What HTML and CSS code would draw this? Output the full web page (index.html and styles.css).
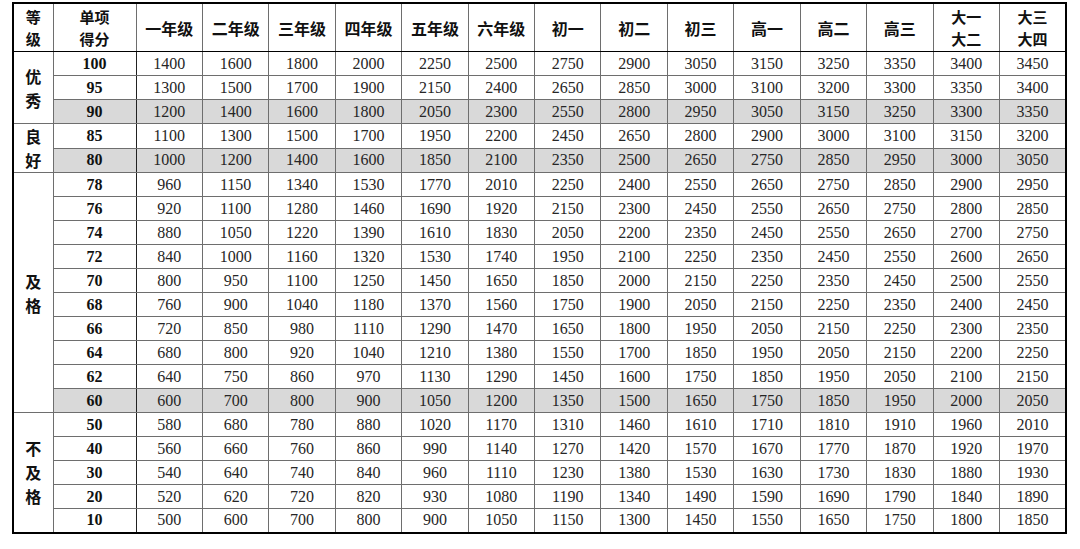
FILE: index.html
```html
<!DOCTYPE html>
<html lang="zh">
<head>
<meta charset="utf-8">
<title>评分表</title>
<link rel="stylesheet" href="styles.css">
</head>
<body>
<table class="score-table">
  <colgroup>
    <col class="c-grade"><col class="c-score">
    <col span="14">
  </colgroup>
  <thead>
    <tr class="head">
      <th class="two">等<br>级</th>
      <th class="two">单项<br>得分</th>
      <th>一年级</th><th>二年级</th><th>三年级</th><th>四年级</th><th>五年级</th><th>六年级</th>
      <th>初一</th><th>初二</th><th>初三</th><th>高一</th><th>高二</th><th>高三</th>
      <th class="two">大一<br>大二</th><th class="two">大三<br>大四</th>
    </tr>
  </thead>
  <tbody>
    <tr class="grp"><td class="grade" rowspan="3">优<br>秀</td><td class="sc">100</td><td>1400</td><td>1600</td><td>1800</td><td>2000</td><td>2250</td><td>2500</td><td>2750</td><td>2900</td><td>3050</td><td>3150</td><td>3250</td><td>3350</td><td>3400</td><td>3450</td></tr>
    <tr><td class="sc">95</td><td>1300</td><td>1500</td><td>1700</td><td>1900</td><td>2150</td><td>2400</td><td>2650</td><td>2850</td><td>3000</td><td>3100</td><td>3200</td><td>3300</td><td>3350</td><td>3400</td></tr>
    <tr class="shade"><td class="sc">90</td><td>1200</td><td>1400</td><td>1600</td><td>1800</td><td>2050</td><td>2300</td><td>2550</td><td>2800</td><td>2950</td><td>3050</td><td>3150</td><td>3250</td><td>3300</td><td>3350</td></tr>
    <tr class="grp"><td class="grade" rowspan="2">良<br>好</td><td class="sc">85</td><td>1100</td><td>1300</td><td>1500</td><td>1700</td><td>1950</td><td>2200</td><td>2450</td><td>2650</td><td>2800</td><td>2900</td><td>3000</td><td>3100</td><td>3150</td><td>3200</td></tr>
    <tr class="shade"><td class="sc">80</td><td>1000</td><td>1200</td><td>1400</td><td>1600</td><td>1850</td><td>2100</td><td>2350</td><td>2500</td><td>2650</td><td>2750</td><td>2850</td><td>2950</td><td>3000</td><td>3050</td></tr>
    <tr class="grp"><td class="grade" rowspan="10">及<br>格</td><td class="sc">78</td><td>960</td><td>1150</td><td>1340</td><td>1530</td><td>1770</td><td>2010</td><td>2250</td><td>2400</td><td>2550</td><td>2650</td><td>2750</td><td>2850</td><td>2900</td><td>2950</td></tr>
    <tr><td class="sc">76</td><td>920</td><td>1100</td><td>1280</td><td>1460</td><td>1690</td><td>1920</td><td>2150</td><td>2300</td><td>2450</td><td>2550</td><td>2650</td><td>2750</td><td>2800</td><td>2850</td></tr>
    <tr><td class="sc">74</td><td>880</td><td>1050</td><td>1220</td><td>1390</td><td>1610</td><td>1830</td><td>2050</td><td>2200</td><td>2350</td><td>2450</td><td>2550</td><td>2650</td><td>2700</td><td>2750</td></tr>
    <tr><td class="sc">72</td><td>840</td><td>1000</td><td>1160</td><td>1320</td><td>1530</td><td>1740</td><td>1950</td><td>2100</td><td>2250</td><td>2350</td><td>2450</td><td>2550</td><td>2600</td><td>2650</td></tr>
    <tr><td class="sc">70</td><td>800</td><td>950</td><td>1100</td><td>1250</td><td>1450</td><td>1650</td><td>1850</td><td>2000</td><td>2150</td><td>2250</td><td>2350</td><td>2450</td><td>2500</td><td>2550</td></tr>
    <tr><td class="sc">68</td><td>760</td><td>900</td><td>1040</td><td>1180</td><td>1370</td><td>1560</td><td>1750</td><td>1900</td><td>2050</td><td>2150</td><td>2250</td><td>2350</td><td>2400</td><td>2450</td></tr>
    <tr><td class="sc">66</td><td>720</td><td>850</td><td>980</td><td>1110</td><td>1290</td><td>1470</td><td>1650</td><td>1800</td><td>1950</td><td>2050</td><td>2150</td><td>2250</td><td>2300</td><td>2350</td></tr>
    <tr><td class="sc">64</td><td>680</td><td>800</td><td>920</td><td>1040</td><td>1210</td><td>1380</td><td>1550</td><td>1700</td><td>1850</td><td>1950</td><td>2050</td><td>2150</td><td>2200</td><td>2250</td></tr>
    <tr><td class="sc">62</td><td>640</td><td>750</td><td>860</td><td>970</td><td>1130</td><td>1290</td><td>1450</td><td>1600</td><td>1750</td><td>1850</td><td>1950</td><td>2050</td><td>2100</td><td>2150</td></tr>
    <tr class="shade"><td class="sc">60</td><td>600</td><td>700</td><td>800</td><td>900</td><td>1050</td><td>1200</td><td>1350</td><td>1500</td><td>1650</td><td>1750</td><td>1850</td><td>1950</td><td>2000</td><td>2050</td></tr>
    <tr class="grp"><td class="grade" rowspan="5">不<br>及<br>格</td><td class="sc">50</td><td>580</td><td>680</td><td>780</td><td>880</td><td>1020</td><td>1170</td><td>1310</td><td>1460</td><td>1610</td><td>1710</td><td>1810</td><td>1910</td><td>1960</td><td>2010</td></tr>
    <tr><td class="sc">40</td><td>560</td><td>660</td><td>760</td><td>860</td><td>990</td><td>1140</td><td>1270</td><td>1420</td><td>1570</td><td>1670</td><td>1770</td><td>1870</td><td>1920</td><td>1970</td></tr>
    <tr><td class="sc">30</td><td>540</td><td>640</td><td>740</td><td>840</td><td>960</td><td>1110</td><td>1230</td><td>1380</td><td>1530</td><td>1630</td><td>1730</td><td>1830</td><td>1880</td><td>1930</td></tr>
    <tr><td class="sc">20</td><td>520</td><td>620</td><td>720</td><td>820</td><td>930</td><td>1080</td><td>1190</td><td>1340</td><td>1490</td><td>1590</td><td>1690</td><td>1790</td><td>1840</td><td>1890</td></tr>
    <tr><td class="sc">10</td><td>500</td><td>600</td><td>700</td><td>800</td><td>900</td><td>1050</td><td>1150</td><td>1300</td><td>1450</td><td>1550</td><td>1650</td><td>1750</td><td>1800</td><td>1850</td></tr>
  </tbody>
</table>
</body>
</html>
```
FILE: styles.css
```css
html, body {
  margin: 0;
  padding: 0;
  background: #ffffff;
}

body {
  padding: 2px 0 0 12px;
}

.score-table {
  border-collapse: collapse;
  table-layout: fixed;
  width: 1055px;
  border: 2px solid #000;
  font-family: "Liberation Serif", "Noto Sans CJK SC", serif;
  color: #262626;
}

.c-grade { width: 40px; }
.c-score { width: 83px; }

.score-table th,
.score-table td {
  border: 1px solid #6e6e6e;
  padding: 0;
  text-align: center;
  vertical-align: middle;
}

.head th {
  height: 47px;
  font-family: "Noto Sans CJK SC", sans-serif;
  font-weight: 700;
  font-size: 16px;
  line-height: 22px;
  color: #111;
  border-bottom: 1px solid #000;
}

.head th.two {
  font-size: 15px;
  line-height: 22px;
}

tbody tr {
  height: 24px;
}

tbody td {
  font-size: 16px;
  line-height: 20px;
}

tbody tr.grp td {
  border-top: 1px solid #000;
}

.shade td:not(.grade) {
  background: #d9d9d9;
}

td.sc {
  font-weight: 700;
  color: #111;
  border-right-color: #222;
}

td.grade {
  font-family: "Noto Sans CJK SC", sans-serif;
  font-weight: 700;
  font-size: 16px;
  line-height: 24px;
  color: #111;
  background: #fff;
}
```
